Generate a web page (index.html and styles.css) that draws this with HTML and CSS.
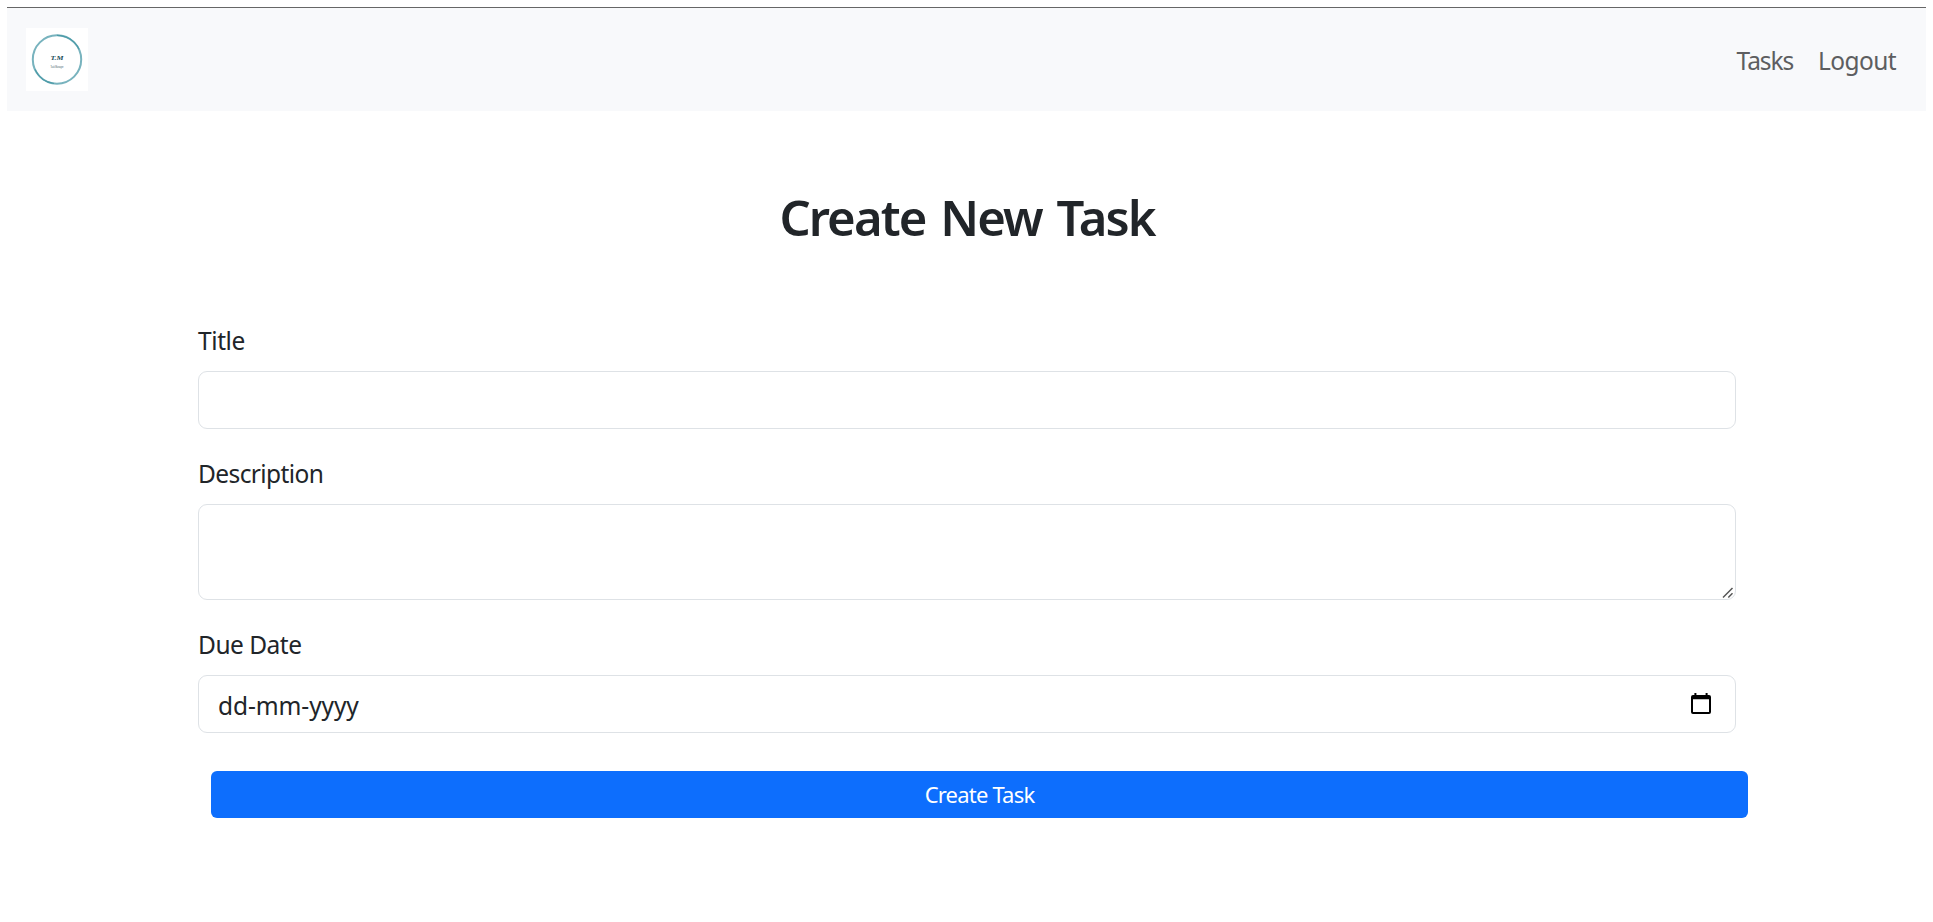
FILE: index.html
```html
<!DOCTYPE html>
<html lang="en">
<head>
<meta charset="utf-8">
<title>Create New Task</title>
<link rel="stylesheet" href="styles.css">
</head>
<body>
<nav class="navbar">
  <a class="brand" href="#">
    <svg width="62" height="63" viewBox="0 0 62 63">
      <rect width="62" height="63" fill="#fff"/>
      <circle cx="31" cy="31.500" r="24.200" fill="none" stroke="#78b3be" stroke-width="2"/>
      <path d="M31 7.300a24.200 24.200 0 0 1 22 14M9 41.500a24.200 24.200 0 0 0 19 14" fill="none" stroke="#4c9ba8" stroke-width="1.200"/>
      <text class="logo-mark" x="24.500" y="32" textLength="13" lengthAdjust="spacingAndGlyphs">T.M</text>
      <text class="logo-sub" x="24.500" y="40" textLength="13" lengthAdjust="spacingAndGlyphs">Task Manager</text>
    </svg>
  </a>
  <div class="links"><a class="tasks" href="#">Tasks</a><a class="logout" href="#">Logout</a></div>
</nav>
<main class="container">
  <h1>Create New Task</h1>
  <form>
    <div class="field"><label class="l-title" for="title">Title</label><input id="title" class="control" type="text"></div>
    <div class="field"><label class="l-desc" for="description">Description</label>
      <div class="area-wrap"><textarea id="description" class="control area"></textarea>
      <svg class="grip" width="12" height="12" viewBox="0 0 12 12"><path d="M1 10.500l9.500-9.500M6.300 10.500l4.200-4.200" fill="none" stroke="#555" stroke-width="1.500"/></svg></div>
    </div>
    <div class="field"><label class="l-due">Due Date</label>
      <div class="control date"><span class="date-text">dd-mm-yyyy</span>
        <svg width="20" height="22" viewBox="0 0 20 22"><path fill="#000" fill-rule="evenodd" d="M3.400 0h2v2h9.200V0h2v2H18a2 2 0 0 1 2 2v15a2 2 0 0 1-2 2H2a2 2 0 0 1-2-2V4a2 2 0 0 1 2-2h1.400zM2 6.300V19h16V6.300z"/></svg>
      </div>
    </div>
    <button class="submit" type="button">Create Task</button>
  </form>
</main>
</body>
</html>
```
FILE: styles.css
```css
* { box-sizing: border-box; }
body {
  margin: 0;
  padding: 7px 7px 0;
  background: #fff;
  color: #212529;
  font-family: "Noto Sans", "Open Sans", sans-serif;
  font-size: 24.5px;
}
.navbar {
  display: flex;
  justify-content: space-between;
  height: 104px;
  padding: 20px 30px 0 19px;
  border-top: 1px solid #666;
  background: #f8f9fb;
}
.brand svg { display: block; }
.logo-mark { font: italic bold 7px "Liberation Serif", serif; fill: #174b58; }
.logo-sub { font: 3px "Liberation Sans", sans-serif; fill: #46616a; }
.links { display: flex; gap: 25px; padding-top: 15px; line-height: 36px; }
.links a { color: #5d5e60; text-decoration: none; }
.tasks { letter-spacing: -1.1px; }
.logout { letter-spacing: -.6px; }
.container { width: 1538px; margin: 0 0 0 191px; }
h1 {
  margin: 0;
  padding-top: 72px;
  height: 210px;
  font-size: 49px;
  font-weight: 600;
  line-height: 68px;
  letter-spacing: -1.9px;
  word-spacing: 4px;
  text-align: center;
}
.field { margin-bottom: 25px; }
label { display: block; height: 50px; line-height: 40px; }
.l-title { letter-spacing: -.4px; }
.l-desc { letter-spacing: -.6px; }
.l-due { letter-spacing: -.5px; }
.control {
  display: block;
  width: 100%;
  height: 58px;
  border: 1px solid #dee2e6;
  border-radius: 9px;
  background: #fff;
}
.area-wrap { position: relative; }
.area { height: 96px; resize: none; }
.grip { position: absolute; right: 2px; bottom: 1px; }
.date {
  display: flex;
  justify-content: space-between;
  padding: 17px 24px 0 19px;
}
.date-text { line-height: 26px; letter-spacing: -.1px; }
.submit {
  display: block;
  width: 1537px;
  height: 47px;
  margin: 38px 0 0 13px;
  padding: 0;
  border: 0;
  border-radius: 6px;
  background: #0d6efd;
  color: #fff;
  font: 22px/47px "Noto Sans", sans-serif;
  letter-spacing: -.8px;
}
```
